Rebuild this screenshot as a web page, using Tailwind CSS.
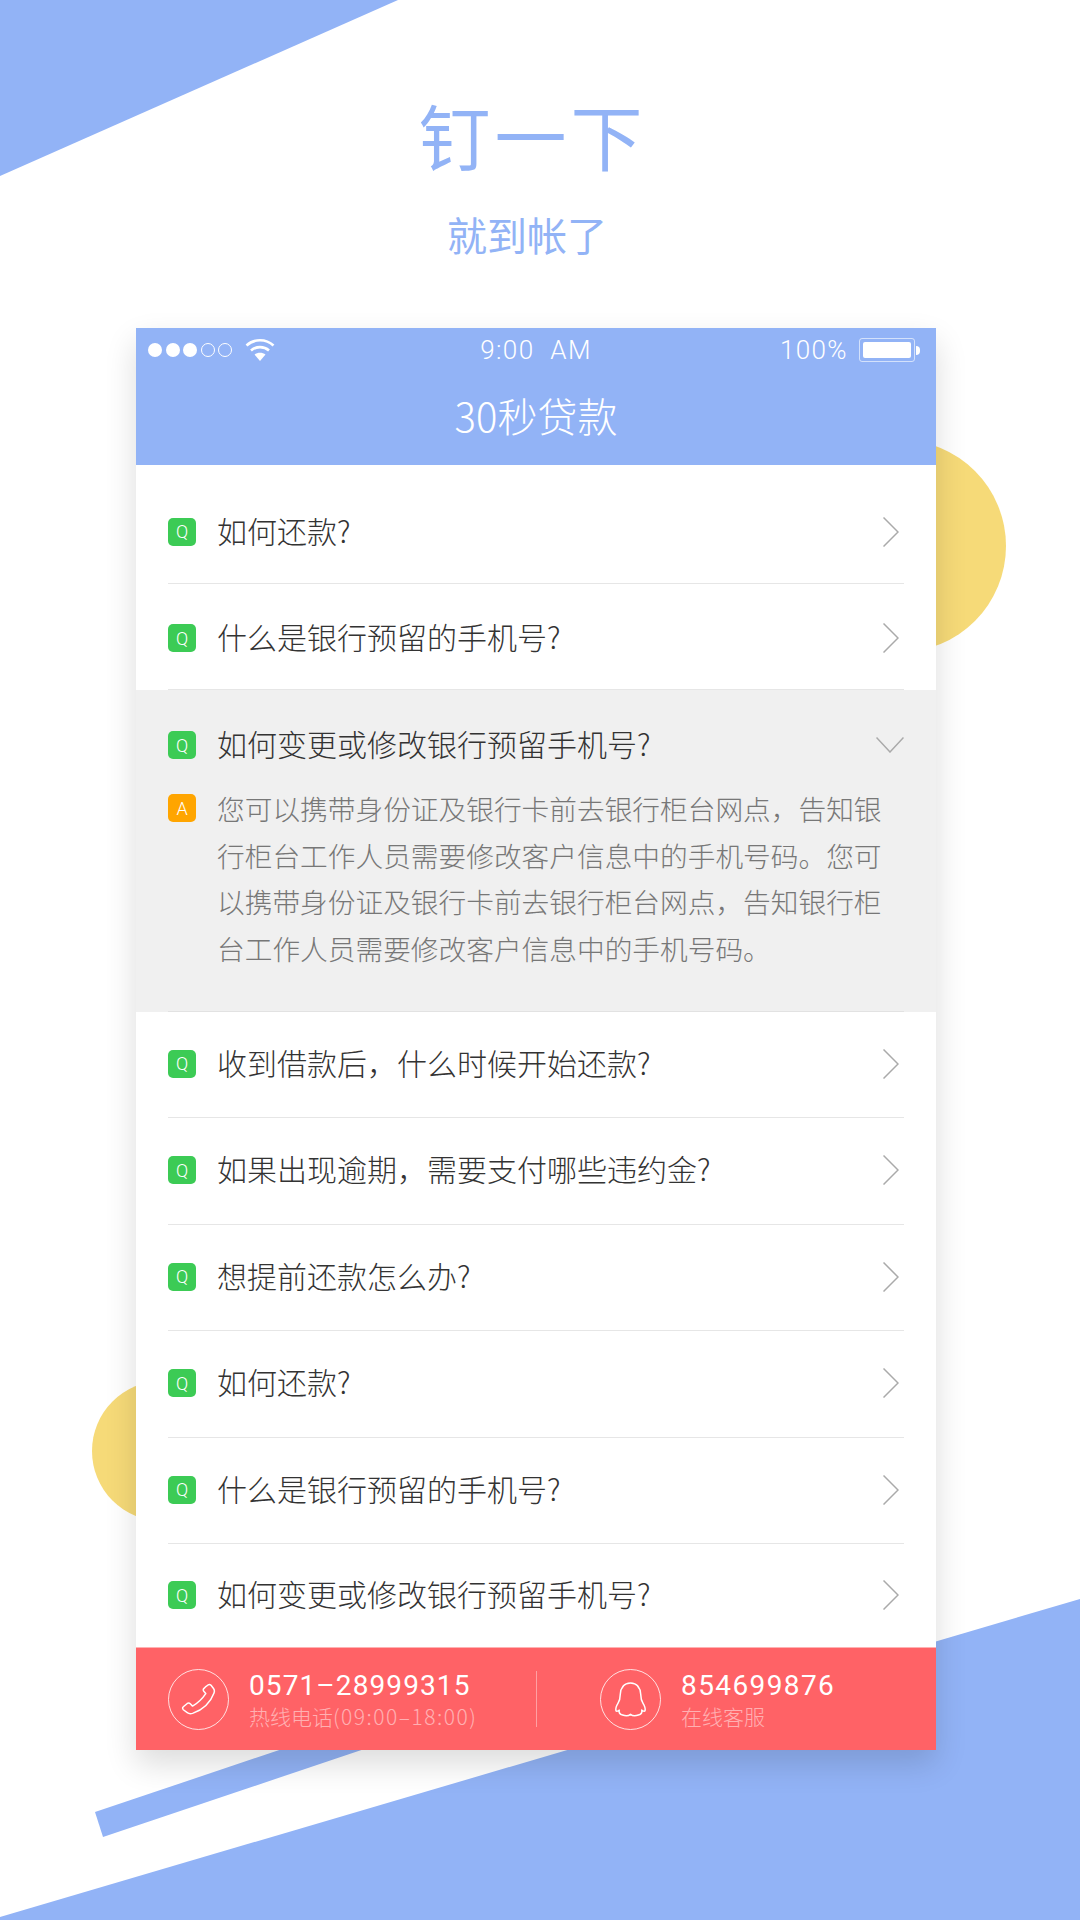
<!DOCTYPE html>
<html lang="zh-CN">
<head>
  <meta charset="UTF-8" />
  <meta name="viewport" content="width=device-width, initial-scale=1.0" />
  <title>30秒贷款</title>
  <script src="https://cdn.jsdelivr.net/npm/@tailwindcss/browser@4"></script>
</head>
<body class="bg-white">
  <div class="relative w-[1080px] h-[1920px] overflow-hidden bg-white font-['Noto_Sans_CJK_SC',sans-serif]">

    <!-- background shapes -->
    <svg class="absolute inset-0" width="1080" height="1920" viewBox="0 0 1080 1920">
      <polygon points="0,0 398,0 0,176" fill="#92b3f6" />
      <circle cx="900" cy="546" r="106" fill="#f6da78" />
      <circle cx="162" cy="1451" r="70" fill="#f6da78" />
      <polygon points="95,1812 103,1837 510,1700 428,1700" fill="#92b3f6" />
      <polygon points="0,1917 1080,1599 1080,1920 0,1920" fill="#92b3f6" />
    </svg>

    <div class="relative">
      <!-- heading -->
      <div class="h-[328px] flex flex-col items-center text-[#92b3f6]">
        <div class="mt-[86px] pr-[15px] text-[72px] leading-[96px] tracking-[4px]">钉一下</div>
        <div class="mt-[24px] pr-[26px] text-[40px] leading-[56px]">就到帐了</div>
      </div>

      <!-- phone card -->
      <div class="ml-[136px] w-[800px] bg-white shadow-[0_14px_30px_rgba(0,0,0,0.14)]">
        <div class="h-[137px] bg-[#92b3f6] text-white">
          <div class="relative h-[42px] flex items-center justify-between pl-[12px] pr-[16px] pt-[2px] font-['Roboto',sans-serif] font-light text-[26px] tracking-[1.4px]">
            <div class="flex items-center gap-[3.5px]">
              <span class="w-[14px] h-[14px] rounded-full bg-white"></span>
              <span class="w-[14px] h-[14px] rounded-full bg-white"></span>
              <span class="w-[14px] h-[14px] rounded-full bg-white"></span>
              <span class="w-[14px] h-[14px] rounded-full border border-white"></span>
              <span class="w-[14px] h-[14px] rounded-full border border-white"></span>
              <svg class="ml-[9px]" width="30" height="24" viewBox="0 0 30 24" fill="none" stroke="white" stroke-width="2.6">
                <path d="M1.5 7.5 C9 0.5 21 0.5 28.5 7.5" />
                <path d="M6 12.5 C11 8 19 8 24 12.5" />
                <path d="M15 23 L9.5 16.5 C12.5 14.3 17.5 14.3 20.5 16.5 Z" fill="white" stroke="none" />
              </svg>
            </div>
            <span class="absolute left-0 right-0 text-center [word-spacing:8px]">9:00 AM</span>
            <div class="flex items-center gap-[11px]">
              <span>100%</span>
              <div class="flex items-center gap-[1px]">
                <div class="w-[56px] h-[24px] p-[3px] rounded-[3px] border border-white/60">
                  <div class="w-full h-full rounded-[2px] bg-white"></div>
                </div>
                <div class="w-[4px] h-[9px] rounded-r-full bg-white"></div>
              </div>
            </div>
          </div>
          <div class="h-[95px] pb-[6px] flex items-center justify-center text-[40px] font-extralight">30秒贷款</div>
        </div>

        <div id="faq-list" class="pt-[12px]"></div>

        <!-- contact bar -->
        <div class="h-[103px] flex items-center bg-[#ff6266] border-t border-white/50 text-white">
          <div class="w-[401px] h-[56px] pl-[32px] flex items-center gap-[20px] border-r border-white/40">
            <div class="w-[61px] h-[61px] shrink-0 rounded-full border border-white/80 flex items-center justify-center">
              <svg width="37" height="33" viewBox="60 65 110 100" fill="none" stroke="white" stroke-width="4.5" stroke-linejoin="round">
                <path d="M136 77 L144 71 C147 69 151 70 153 72 L160 81 C164 86 164 90 162 95 C152 122 128 146 97 157 C90 159 85 158 81 155 L69 146 C66 143 66 139 69 137 L81 127 C84 125 87 125 90 128 L97 135 C112 126 127 112 137 97 L131 90 C129 87 129 84 131 82 Z" />
              </svg>
            </div>
            <div>
              <div class="pt-[2px] font-['Roboto',sans-serif] font-normal text-[28px] leading-[32px] tracking-[1.1px]">0571–28999315</div>
              <div class="text-[21px] leading-[28px] text-white/50 font-light whitespace-nowrap">热线电话<span class="tracking-[1.5px]">(09:00–18:00)</span></div>
            </div>
          </div>
          <div class="flex-1 h-[56px] pl-[63px] flex items-center gap-[20px]">
            <div class="w-[61px] h-[61px] shrink-0 rounded-full border border-white/80 flex items-center justify-center">
              <svg width="35" height="37" viewBox="66 64 104 112" fill="none" stroke="white" stroke-width="4.5" stroke-linejoin="round">
                <path d="M118 70 C98 70 88 85 87 105 C87 117 85 124 80 132 C75 140 72 147 74 154 C76 157 80 155 84 152 C82 160 87 165 94 167 C102 170 112 170 118 165 C124 170 134 170 142 167 C149 165 154 160 152 152 C156 155 160 157 162 154 C164 147 161 140 156 132 C151 124 149 117 149 105 C148 85 138 70 118 70 Z" />
              </svg>
            </div>
            <div>
              <div class="pt-[2px] font-['Roboto',sans-serif] font-normal text-[28px] leading-[32px] tracking-[1.4px]">854699876</div>
              <div class="text-[21px] leading-[28px] text-white/50 font-light">在线客服</div>
            </div>
          </div>
        </div>
      </div>
    </div>
  </div>

  <script>
    const questions = [
      '如何还款?',
      '什么是银行预留的手机号?',
      '如何变更或修改银行预留手机号?',
      '收到借款后，什么时候开始还款?',
      '如果出现逾期，需要支付哪些违约金?',
      '想提前还款怎么办?',
      '如何还款?',
      '什么是银行预留的手机号?',
      '如何变更或修改银行预留手机号?'
    ];
    const openIndex = 2;
    const answer = '您可以携带身份证及银行卡前去银行柜台网点，告知银行柜台工作人员需要修改客户信息中的手机号码。您可以携带身份证及银行卡前去银行柜台网点，告知银行柜台工作人员需要修改客户信息中的手机号码。';

    function renderBadge(letter, color) {
      return `<span class="w-[28px] h-[28px] shrink-0 rounded-[5px] flex items-center justify-center text-white text-[18px] font-light font-['Roboto',sans-serif] ${color}">${letter}</span>`;
    }

    function renderRow(question, i) {
      if (i === openIndex) {
        return `
          <div class="relative bg-[#f0f0f0] h-[321.5px] pl-[32px] pr-[32px] pt-[40px]">
            <div class="flex items-center h-[30px]">
              ${renderBadge('Q', 'bg-[#3ccb55]')}
              <span class="ml-[21px] pb-[3px] flex-1 text-[30px] font-light text-[#333]">${question}</span>
              <svg width="28" height="16" viewBox="0 0 28 16" fill="none" stroke="#aaa" stroke-width="1.5"><path d="M0.5 0.5 L14 15 L27.5 0.5" /></svg>
            </div>
            <div class="flex mt-[34px]">
              ${renderBadge('A', 'bg-[#ffa500]')}
              <p class="ml-[21px] w-[680px] -mt-[9px] text-[27.7px] leading-[46.5px] font-light text-[#777]">${answer}</p>
            </div>
            <div class="absolute left-[32px] right-[32px] bottom-0 h-px bg-[#e2e2e2]"></div>
          </div>`;
      }
      const last = i === questions.length - 1;
      const top = i < openIndex;
      return `
        <div class="mx-[32px] flex items-center ${last ? 'h-[103px]' : 'h-[106.5px] border-b border-[#e6e6e6]'} ${top ? 'pt-[4px]' : 'pb-[1px]'}">
          ${renderBadge('Q', 'bg-[#3ccb55]')}
          <span class="ml-[21px] pb-[3px] flex-1 text-[30px] font-light text-[#333]">${question}</span>
          <svg class="mr-[5px]" width="16" height="30" viewBox="0 0 16 30" fill="none" stroke="#aaa" stroke-width="1.5"><path d="M0.5 0.5 L15 15 L0.5 29.5" /></svg>
        </div>`;
    }

    document.getElementById('faq-list').innerHTML = questions.map(renderRow).join('');
  </script>
</body>
</html>
